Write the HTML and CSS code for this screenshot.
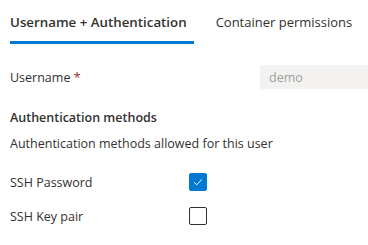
FILE: index.html
```html
<!DOCTYPE html>
<html lang="en">
<head>
    <meta charset="UTF-8">
    <title>Usuario</title>
    <link rel="stylesheet" href="styles.css">
</head>
<body>
    <div class="abas">
        <div class="aba ativa">Username + Authentication</div>
        <div class="aba">Container permissions</div>
    </div>

    <div class="linha campo">
        <label class="rotulo">Username <span class="obrigatorio">*</span></label>
        <input class="entrada" type="text" value="demo" disabled>
    </div>

    <h3 class="titulo">Authentication methods</h3>
    <p class="descricao">Authentication methods allowed for this user</p>

    <div class="linha opcao primeira">
        <span class="rotulo">SSH Password</span>
        <span class="caixa marcada">
            <svg width="12" height="12" viewBox="0 0 12 12"><path d="M2.2 6.3 L4.8 8.8 L9.8 3.4" fill="none" stroke="white" stroke-width="1"/></svg>
        </span>
    </div>
    <div class="linha opcao">
        <span class="rotulo">SSH Key pair</span>
        <span class="caixa"></span>
    </div>
</body>
</html>
```

FILE: styles.css
```css
body {
    margin: 0;
    padding: 0 0 0 10px;
    font-family: "Open Sans", "Noto Sans", sans-serif;
    font-size: 12.5px;
    color: #323130;
    background: white;
    overflow: hidden;
}

.abas {
    display: flex;
    gap: 22px;
    padding-top: 12px;
}

.aba {
    font-size: 13.3px;
    line-height: 20px;
    padding-bottom: 9px;
    border-bottom: 3px solid transparent;
}

.aba.ativa {
    font-weight: 600;
    border-bottom-color: #0078d4;
    padding-right: 7px;
}

.aba + .aba {
    font-size: 13px;
}

.linha {
    display: flex;
    align-items: center;
}

.rotulo {
    width: 179px;
    flex-shrink: 0;
}

.campo .rotulo {
    width: 250px;
}

.campo {
    margin-top: 21px;
}

.obrigatorio {
    color: #a4262c;
}

.entrada {
    flex: 1;
    min-width: 0;
    height: 24px;
    box-sizing: border-box;
    border: none;
    border-radius: 2px 0 0 2px;
    background: #f3f2f1;
    color: #a19f9d;
    font: inherit;
    padding: 0 9px;
    outline: none;
}

.titulo {
    margin: 19px 0 0 0;
    font-size: 12.5px;
    font-weight: 600;
    line-height: 20px;
}

.descricao {
    margin: 6px 0 0 0;
    line-height: 20px;
}

.opcao {
    height: 18px;
}

.opcao.primeira {
    margin-top: 19px;
}

.opcao + .opcao {
    margin-top: 16px;
}

.caixa {
    width: 18px;
    height: 18px;
    box-sizing: border-box;
    border: 1px solid #323130;
    border-radius: 2px;
    display: flex;
    align-items: center;
    justify-content: center;
}

.caixa.marcada {
    background: #0078d4;
    border-color: #0078d4;
}
```
